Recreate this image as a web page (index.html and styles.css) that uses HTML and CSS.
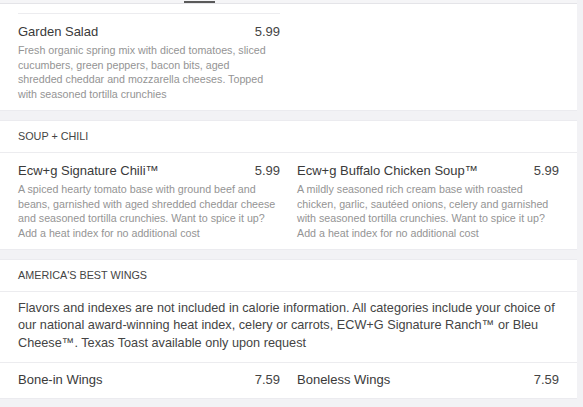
FILE: index.html
```html
<!DOCTYPE html>
<html>
<head>
<meta charset="utf-8">
<link rel="stylesheet" href="styles.css">
</head>
<body>
<div class="page">
  <div class="tabs"><div class="tab-bar"></div></div>
  <div class="cards">
    <section class="card">
      <div class="grid top-grid">
        <div class="item">
          <div class="item-head"><span class="name">Garden Salad</span><span class="price">5.99</span></div>
          <p class="desc">Fresh organic spring mix with diced tomatoes, sliced cucumbers, green peppers, bacon bits, aged shredded cheddar and mozzarella cheeses. Topped with seasoned tortilla crunchies</p>
        </div>
      </div>
    </section>
    <section class="card">
      <h2 class="cat">SOUP + CHILI</h2>
      <div class="grid">
        <div class="item">
          <div class="item-head"><span class="name">Ecw+g Signature Chili™</span><span class="price">5.99</span></div>
          <p class="desc">A spiced hearty tomato base with ground beef and beans, garnished with aged shredded cheddar cheese and seasoned tortilla crunchies. Want to spice it up? Add a heat index for no additional cost</p>
        </div>
        <div class="item">
          <div class="item-head"><span class="name">Ecw+g Buffalo Chicken Soup™</span><span class="price">5.99</span></div>
          <p class="desc">A mildly seasoned rich cream base with roasted chicken, garlic, sautéed onions, celery and garnished with seasoned tortilla crunchies. Want to spice it up? Add a heat index for no additional cost</p>
        </div>
      </div>
    </section>
    <section class="card">
      <h2 class="cat">AMERICA'S BEST WINGS</h2>
      <p class="note">Flavors and indexes are not included in calorie information. All categories include your choice of our national award-winning heat index, celery or carrots, ECW+G Signature Ranch™ or Bleu Cheese™. Texas Toast available only upon request</p>
      <div class="grid">
        <div class="item row">
          <div class="item-head"><span class="name">Bone-in Wings</span><span class="price">7.59</span></div>
        </div>
        <div class="item row">
          <div class="item-head"><span class="name">Boneless Wings</span><span class="price">7.59</span></div>
        </div>
      </div>
    </section>
  </div>
</div>
</body>
</html>
```

FILE: styles.css
```css
html, body {
  margin: 0;
  padding: 0;
}
body {
  background: #f2f2f5;
  font-family: "Liberation Sans", Arial, sans-serif;
  color: #333;
  width: 583px;
  height: 407px;
  overflow: hidden;
}
.page {
  width: 577px;
}
.tabs {
  height: 3px;
  background: #f5f5f7;
  border-bottom: 1px solid #e4e4e8;
  padding-left: 184px;
  display: flex;
  align-items: flex-end;
}
.tab-bar {
  width: 31px;
  height: 2px;
  background: #5a5a5a;
}
.cards {
  display: flex;
  flex-direction: column;
  gap: 9px;
}
.card {
  background: #fff;
  border-bottom: 1px solid #ebebef;
}
.card + .card {
  border-top: 1px solid #ebebef;
}
.grid {
  display: grid;
  grid-template-columns: 262px 262px;
  column-gap: 17px;
  padding: 0 18px;
}
.top-grid {
  padding-top: 9px;
}
.top-grid .item {
  border-top: 1px solid #ececef;
}
.item {
  padding: 9px 0 9px;
}
.item-head {
  display: flex;
  justify-content: space-between;
  font-size: 13px;
  line-height: 17px;
  color: #3a3a3a;
}
.price {
  color: #444;
}
.desc {
  margin: 3px 0 0;
  padding-right: 3.6px;
  font-size: 10.7px;
  line-height: 14.5px;
  color: #949494;
}
.cat {
  margin: 0;
  padding: 0 18px;
  height: 31px;
  line-height: 31px;
  font-size: 10.8px;
  font-weight: normal;
  color: #444;
  border-bottom: 1px solid #ececef;
}
.note {
  margin: 0;
  padding: 8px 18px 10px;
  font-size: 12.7px;
  line-height: 17.3px;
  color: #444;
  border-bottom: 1px solid #ececef;
}
.row {
  padding: 8px 0 10px;
}
```
